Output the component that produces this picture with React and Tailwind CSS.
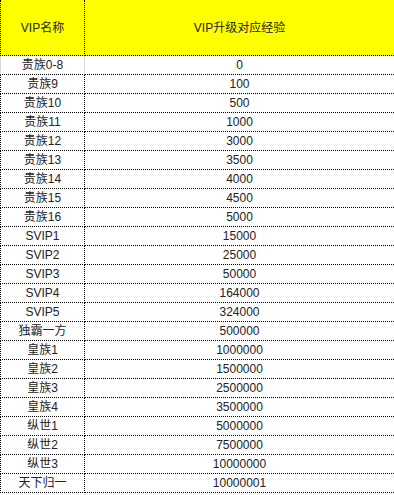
import React from 'react';

const rows = [
  ['贵族0-8', '0'],
  ['贵族9', '100'],
  ['贵族10', '500'],
  ['贵族11', '1000'],
  ['贵族12', '3000'],
  ['贵族13', '3500'],
  ['贵族14', '4000'],
  ['贵族15', '4500'],
  ['贵族16', '5000'],
  ['SVIP1', '15000'],
  ['SVIP2', '25000'],
  ['SVIP3', '50000'],
  ['SVIP4', '164000'],
  ['SVIP5', '324000'],
  ['独霸一方', '500000'],
  ['皇族1', '1000000'],
  ['皇族2', '1500000'],
  ['皇族3', '2500000'],
  ['皇族4', '3500000'],
  ['纵世1', '5000000'],
  ['纵世2', '7500000'],
  ['纵世3', '10000000'],
  ['天下归一', '10000001'],
];

const App = () => {
  return (
    <div
      className="w-[394px] h-[495px] bg-white text-[12px] text-[#222] overflow-hidden"
      style={{ fontFamily: '"Liberation Sans", "Noto Sans CJK SC", sans-serif' }}
    >
      <div className="grid grid-cols-[85px_1fr]">
        {/* Header */}
        <div className="h-[56px] bg-[#ffff00] border-l border-r border-b border-dotted border-black flex items-center justify-center">
          VIP名称
        </div>
        <div className="h-[56px] bg-[#ffff00] border-b border-dotted border-black flex items-center justify-center">
          VIP升级对应经验
        </div>

        {rows.map(([name, exp], i) => (
          <React.Fragment key={name}>
            <div
              className={`h-[19px] border-b border-dotted border-b-black flex items-center justify-center leading-none ${
                i === 0
                  ? 'border-l border-r border-l-[#d9d9d9] border-r-[#d9d9d9] [border-left-style:solid] [border-right-style:solid]'
                  : 'border-l border-r border-l-black border-r-black'
              }`}
            >
              {name}
            </div>
            <div className="h-[19px] border-b border-dotted border-black flex items-center justify-center leading-none">
              {exp}
            </div>
          </React.Fragment>
        ))}
      </div>
    </div>
  );
};

export default App;
